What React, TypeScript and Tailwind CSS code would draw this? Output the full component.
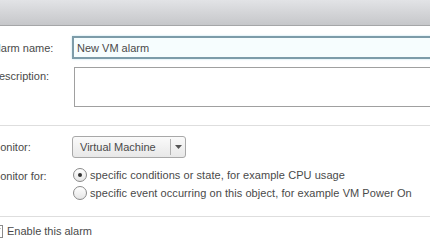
import React from "react";

export default function App() {
  const font = { fontFamily: '"Liberation Sans", Arial, sans-serif' };
  return (
    <div className="w-[430px] h-[244px] overflow-hidden bg-white text-[11px] leading-[16px] text-[#4a4a4a]" style={font}>
      <div className="h-[26px] bg-gradient-to-b from-[#e2e3e6] to-[#c6c7ca] border-b border-[#a5a6a8]" />
      <div className="ml-[-9px] w-[460px]">
        <div className="flex items-center mt-[10px] h-[23px]">
          <div className="w-[81px]">Alarm name:</div>
          <div className="flex-1 h-[23px] border-2 border-[#7d9ca9] bg-[#f6fdfe] flex items-center pl-[3px] shadow-[0_0_2px_#bfe3ee]">
            New VM alarm
          </div>
        </div>
        <div className="flex items-start mt-[8px]">
          <div className="w-[83px] pt-[1px]">Description:</div>
          <div className="flex-1 h-[40px] border border-[#a0a0a0] bg-white" />
        </div>
        <div className="border-t border-[#dedede] mt-[18px]" />
        <div className="flex items-center mt-[10px] h-[22px]">
          <div className="w-[81px]">Monitor:</div>
          <div className="w-[114px] h-[22px] rounded-[3px] border border-[#a8a8a8] bg-gradient-to-b from-[#fafafa] to-[#e8e8e8] flex items-center">
            <div className="flex-1 pl-[7px]">Virtual Machine</div>
            <div className="w-px h-[16px] bg-[#b0b0b0]" />
            <div className="w-[14px] flex justify-center">
              <svg width="7" height="4" viewBox="0 0 7 4"><path d="M0 0h7L3.5 4z" fill="#555" /></svg>
            </div>
          </div>
        </div>
        <div className="flex mt-[9px]">
          <div className="w-[82px] pt-[1px]">Monitor for:</div>
          <div className="flex flex-col gap-[2px]">
            <div className="flex items-center gap-[3px] h-[16px]">
              <div className="w-[14px] h-[14px] rounded-full border border-[#8a8a8a] bg-gradient-to-b from-white to-[#e6e6e6] flex items-center justify-center">
                <div className="w-[4px] h-[4px] rounded-full bg-[#333]" />
              </div>
              <span className="tracking-[0.06px]">specific conditions or state, for example CPU usage</span>
            </div>
            <div className="flex items-center gap-[3px] h-[16px]">
              <div className="w-[14px] h-[14px] rounded-full border border-[#8a8a8a] bg-gradient-to-b from-white to-[#e6e6e6]" />
              <span className="tracking-[0.06px]">specific event occurring on this object, for example VM Power On</span>
            </div>
          </div>
        </div>
        <div className="border-t border-[#dedede] mt-[15px]" />
        <div className="flex items-center mt-[6px] ml-[-1px] gap-[4px] h-[16px]">
          <div className="w-[13px] h-[13px] border border-[#8a8a8a] bg-white flex items-center justify-center">
            <svg width="9" height="8" viewBox="0 0 9 8"><path d="M1 4l2.5 2.5L8 1" stroke="#444" strokeWidth="1.5" fill="none" /></svg>
          </div>
          <span>Enable this alarm</span>
        </div>
      </div>
    </div>
  );
}
